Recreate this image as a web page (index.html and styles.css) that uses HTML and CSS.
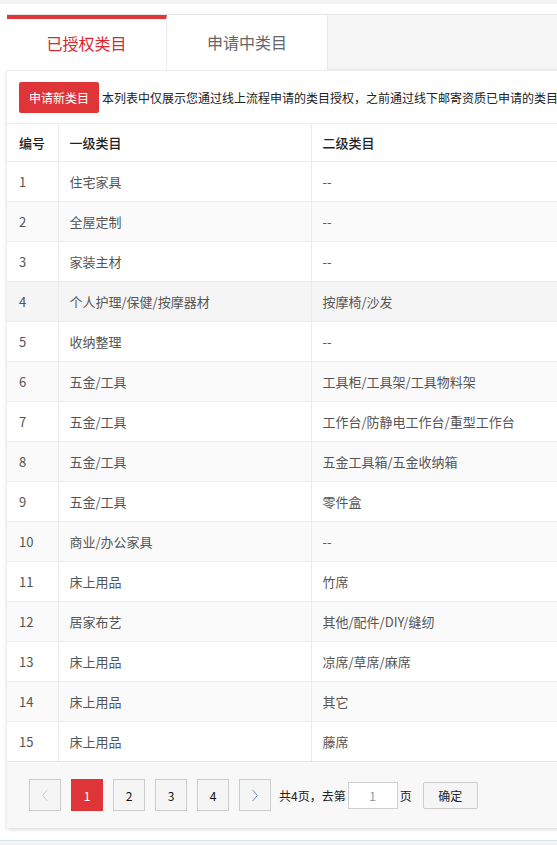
FILE: index.html
```html
<!DOCTYPE html>
<html lang="zh-CN">
<head>
<meta charset="utf-8">
<title>已授权类目</title>
<link rel="stylesheet" href="styles.css">
</head>
<body>
<div class="topbar"></div>
<div class="page">
  <div class="tabs">
    <div class="tab active">已授权类目</div>
    <div class="tab">申请中类目</div>
  </div>
  <div class="card">
    <div class="toolbar">
      <button class="btn-apply">申请新类目</button>
      <span class="desc">本列表中仅展示您通过线上流程申请的类目授权，之前通过线下邮寄资质已申请的类目授权不在此列表中展示</span>
    </div>
    <table class="grid">
      <colgroup>
        <col class="c1"><col class="c2"><col class="c3">
      </colgroup>
      <thead>
        <tr><th>编号</th><th>一级类目</th><th>二级类目</th></tr>
      </thead>
      <tbody>
        <tr><td>1</td><td>住宅家具</td><td>--</td></tr>
        <tr><td>2</td><td>全屋定制</td><td>--</td></tr>
        <tr><td>3</td><td>家装主材</td><td>--</td></tr>
        <tr class="hover"><td>4</td><td>个人护理/保健/按摩器材</td><td>按摩椅/沙发</td></tr>
        <tr><td>5</td><td>收纳整理</td><td>--</td></tr>
        <tr><td>6</td><td>五金/工具</td><td>工具柜/工具架/工具物料架</td></tr>
        <tr><td>7</td><td>五金/工具</td><td>工作台/防静电工作台/重型工作台</td></tr>
        <tr><td>8</td><td>五金/工具</td><td>五金工具箱/五金收纳箱</td></tr>
        <tr><td>9</td><td>五金/工具</td><td>零件盒</td></tr>
        <tr><td>10</td><td>商业/办公家具</td><td>--</td></tr>
        <tr><td>11</td><td>床上用品</td><td>竹席</td></tr>
        <tr><td>12</td><td>居家布艺</td><td>其他/配件/DIY/缝纫</td></tr>
        <tr><td>13</td><td>床上用品</td><td>凉席/草席/麻席</td></tr>
        <tr><td>14</td><td>床上用品</td><td>其它</td></tr>
        <tr><td>15</td><td>床上用品</td><td>藤席</td></tr>
      </tbody>
    </table>
    <div class="pager">
      <span class="pg disabled"><svg viewBox="0 0 10 16" width="8" height="13"><path d="M8 1 L2 8 L8 15" fill="none" stroke="currentColor" stroke-width="1.2"/></svg></span>
      <span class="pg current">1</span>
      <span class="pg">2</span>
      <span class="pg">3</span>
      <span class="pg">4</span>
      <span class="pg next"><svg viewBox="0 0 10 16" width="8" height="13"><path d="M2 1 L8 8 L2 15" fill="none" stroke="currentColor" stroke-width="1.2"/></svg></span>
      <span class="pg-text">共4页，去第</span>
      <input class="pg-input" type="text" value="1">
      <span class="pg-text unit">页</span>
      <button class="pg-go">确定</button>
    </div>
  </div>
  <div class="below"></div>
</div>
<div class="footer-line"></div>
</body>
</html>
```

FILE: styles.css
```css
html, body {
  margin: 0;
  padding: 0;
  background: #ffffff;
  font-family: "Noto Sans CJK SC", "Open Sans", sans-serif;
  color: #333;
  overflow: hidden;
}

.topbar {
  height: 4px;
  background: #f2f2f2;
}

.page {
  padding: 10px 0 0 7px;
  width: 800px;
}

.tabs {
  display: flex;
  height: 55px;
  border-top: 1px solid #e6e6e6;
  background: #f7f7f7;
}

.tab {
  width: 161px;
  box-sizing: border-box;
  background: #fff;
  border-right: 1px solid #e8e8e8;
  font-size: 16px;
  line-height: 55px;
  text-align: center;
  color: #666;
}

.tab.active {
  width: 160px;
  border-top: 4px solid #e0363a;
  line-height: 49px;
  color: #d9262b;
  border-right: 1px solid #ececec;
}

.card {
  background: #fff;
  box-shadow: 0 1px 4px rgba(0, 0, 0, 0.18);
  border-top: 1px solid #ececec;
}

.toolbar {
  display: flex;
  align-items: center;
  height: 52px;
  padding-left: 12px;
  white-space: nowrap;
  overflow: hidden;
}

.btn-apply {
  height: 31px;
  padding: 0 10px;
  border: none;
  border-radius: 2px;
  background: #e03538;
  color: #fff;
  font-family: inherit;
  font-size: 12px;
  line-height: 31px;
  margin-top: 1px;
}

.desc {
  margin-left: 3px;
  font-size: 12px;
  color: #222;
}

.grid {
  border-collapse: collapse;
  table-layout: fixed;
  width: 780px;
  font-size: 13px;
}

.grid .c1 { width: 51px; }
.grid .c2 { width: 253px; }
.grid .c3 { width: 476px; }

.grid th,
.grid td {
  text-align: left;
  padding: 0 0 0 11px;
  border-top: 1px solid #ebebeb;
  border-left: 1px solid #ebebeb;
  white-space: nowrap;
}

.grid th:first-child,
.grid td:first-child {
  border-left: none;
  padding-left: 12px;
}

.grid th {
  height: 37px;
  font-weight: 500;
  color: #222;
}

.grid td {
  height: 39px;
  color: #555;
}

.grid tbody tr:nth-child(even) td {
  background: #fafafa;
}

.grid tbody tr.hover td {
  background: #f5f5f5;
}

.pager {
  display: flex;
  align-items: center;
  height: 66px;
  border-top: 1px solid #e6e6e6;
  background: #f8f8f8;
  padding-left: 22px;
  font-size: 12px;
}

.pg {
  width: 30px;
  height: 30px;
  border: 1px solid #cccccc;
  background: #f5f5f5;
  display: flex;
  align-items: center;
  justify-content: center;
  margin-right: 10px;
  color: #111;
  font-size: 12px;
}

.pg.current {
  width: 32px;
  height: 32px;
  border: none;
  background: #e03538;
  color: #fff;
}

.pg.disabled {
  color: #c8c8c8;
}

.pg.next {
  color: #6a8bbf;
  margin-right: 8px;
}

.pg-text {
  color: #222;
}

.pg-input {
  width: 48px;
  height: 25px;
  box-sizing: content-box;
  padding: 0;
  margin: 0 2px;
  border: 1px solid #d0d0d0;
  background: #fff;
  text-align: center;
  font-family: inherit;
  font-size: 12px;
  color: #8a98b0;
  outline: none;
}

.pg-text.unit {
  margin-right: 11px;
}

.pg-go {
  width: 55px;
  height: 27px;
  border: 1px solid #cccccc;
  border-radius: 2px;
  background: #f5f5f5;
  font-family: inherit;
  font-size: 12px;
  color: #222;
  padding: 0;
}

.below {
  height: 12px;
}

.footer-line {
  height: 10px;
  border-top: 1px solid #dde3ea;
  background: #f4f4f4;
}
```
